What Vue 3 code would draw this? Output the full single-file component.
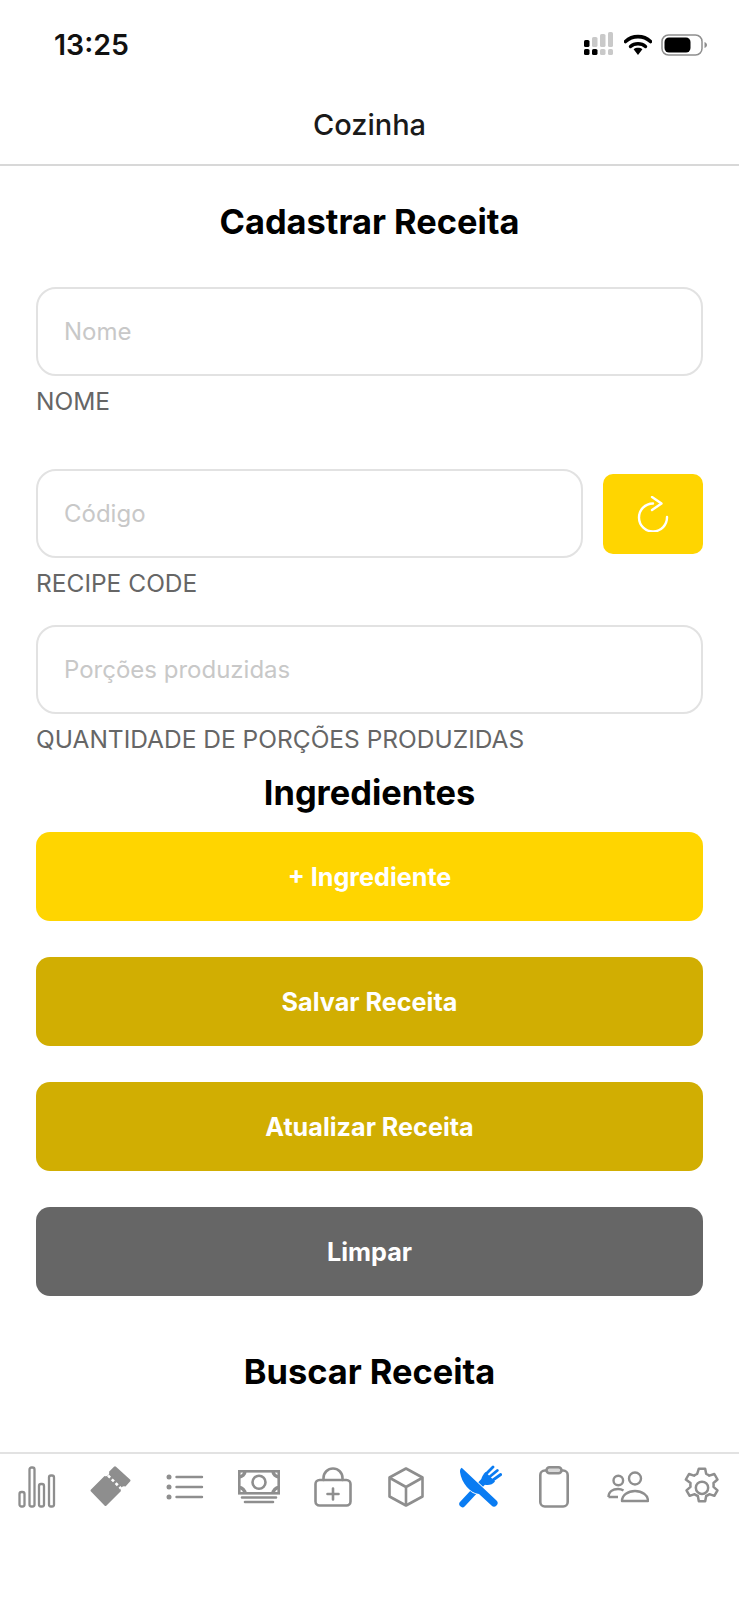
<script setup>
const buttons = [
  { text: '+ Ingrediente', cls: 'yellow' },
  { text: 'Salvar Receita', cls: 'gold' },
  { text: 'Atualizar Receita', cls: 'gold' },
  { text: 'Limpar', cls: 'gray' },
]
</script>

<template>
  <div class="screen">
    <div class="status">
      <span class="time">13:25</span>
      <div class="status-icons">
        <svg width="32" height="26" viewBox="0 0 32 26">
          <g fill="#000"><rect x="1" y="8" width="5.5" height="7" rx="1.6"/><rect x="1" y="17" width="5.5" height="6" rx="1.6"/><rect x="9" y="17" width="5.5" height="6" rx="1.6"/></g>
          <g fill="#c9c9c9"><rect x="9" y="5" width="5.5" height="10" rx="1.6"/><rect x="17" y="2" width="5.5" height="13" rx="1.6"/><rect x="25" y="0" width="5" height="15" rx="1.6"/><rect x="17" y="17" width="5.5" height="6" rx="1.6"/><rect x="25" y="17" width="5" height="6" rx="1.6"/></g>
        </svg>
        <svg width="28" height="22" viewBox="0 0 28 22">
          <path d="M1.5 7.5C8.5 1 19.5 1 26.5 7.5" fill="none" stroke="#000" stroke-width="3.6" stroke-linecap="round"/>
          <path d="M6.5 12.5C10.5 8.8 17.5 8.8 21.5 12.5" fill="none" stroke="#000" stroke-width="3.4" stroke-linecap="round"/>
          <path d="M9.6 15.2 14 21l4.4-5.8c-2.6-1.9-6.2-1.9-8.8 0z" fill="#000"/>
        </svg>
        <svg width="47" height="22" viewBox="0 0 47 22">
          <rect x="1" y="1" width="40" height="20" rx="6.5" fill="none" stroke="#8f8f8f" stroke-width="1.5"/>
          <rect x="3.5" y="3.5" width="26" height="15" rx="4.5" fill="#000"/>
          <path d="M43.5 8v6c1.5-.5 2.5-1.7 2.5-3s-1-2.5-2.5-3z" fill="#8f8f8f"/>
        </svg>
      </div>
    </div>

    <header class="nav">Cozinha</header>

    <main class="content">
      <h2 class="title first">Cadastrar Receita</h2>

      <div class="field">
        <input class="input" placeholder="Nome" />
        <div class="label">NOME</div>
      </div>

      <div class="field code">
        <div class="code-row">
          <input class="input" placeholder="Código" />
          <button class="refresh" type="button" aria-label="Gerar código">
            <svg width="32" height="36" viewBox="0 0 32 36" fill="none" stroke="#fff" stroke-width="2.4" stroke-linecap="round" stroke-linejoin="round">
              <path d="M16 7.5A14 14 0 1 0 30 21"/>
              <path d="M15 1l9.5 6.5L15 14"/>
            </svg>
          </button>
        </div>
        <div class="label">RECIPE CODE</div>
      </div>

      <div class="field portions">
        <input class="input" placeholder="Porções produzidas" />
        <div class="label">QUANTIDADE DE PORÇÕES PRODUZIDAS</div>
      </div>

      <h2 class="title ingredients">Ingredientes</h2>

      <div class="actions">
        <button v-for="b in buttons" :key="b.text" type="button" class="action" :class="b.cls">{{ b.text }}</button>
      </div>

      <h2 class="title search">Buscar Receita</h2>
    </main>

    <nav class="tabs">
      <svg width="38" height="42" viewBox="0 0 38 42" fill="none" stroke="#8e8e8e" stroke-width="2.3">
        <rect x="1.5" y="26" width="5" height="14.5" rx="2"/><rect x="11.5" y="1.5" width="5" height="39" rx="2"/><rect x="21" y="18" width="5" height="22.5" rx="2"/><rect x="31" y="9.5" width="5" height="31" rx="2"/>
      </svg>
      <svg width="42" height="42" viewBox="0 0 42 42">
        <path d="M1 23.5 14.5 10A3.4 3.4 0 0 0 19 5.7L24 .8Q25-.2 26 .8L40 13.5Q41 14.5 40 15.5L35.5 20.5A3.4 3.4 0 0 0 31 25L16.5 39.5Q15.5 40.5 14.5 39.5L1 25.5Q0 24.5 1 23.5z" fill="#8e8e8e"/>
        <path d="M18 9.5 31 22.5" stroke="#fff" stroke-width="2.6" stroke-dasharray="3 2.4" fill="none"/>
      </svg>
      <svg width="38" height="30" viewBox="0 0 38 30" fill="none" stroke="#8e8e8e" stroke-width="2.4" stroke-linecap="round">
        <circle cx="3" cy="5" r="2.5" fill="#8e8e8e" stroke="none"/><circle cx="3" cy="15" r="2.5" fill="#8e8e8e" stroke="none"/><circle cx="3" cy="25" r="2.5" fill="#8e8e8e" stroke="none"/>
        <path d="M10.5 5h25.5M10.5 15h25.5M10.5 25h25.5"/>
      </svg>
      <svg width="42" height="34" viewBox="0 0 42 34" fill="none" stroke="#8e8e8e" stroke-width="2.6">
        <rect x="1.3" y="1.3" width="39.4" height="22"/>
        <circle cx="21" cy="12.3" r="6.5"/>
        <path d="M1 7c3 0 6-2.5 6-6M41 7c-3 0-6-2.5-6-6M1 17.5c3 0 6 2.5 6 6M41 17.5c-3 0-6 2.5-6 6" stroke-width="3.4"/>
        <path d="M4 27.5h34M7 32h28" stroke-linecap="round"/>
      </svg>
      <svg width="38" height="40" viewBox="0 0 38 40" fill="none" stroke="#8e8e8e" stroke-width="2.6" stroke-linecap="round" stroke-linejoin="round">
        <rect x="1.5" y="13" width="35" height="25.5" rx="4"/>
        <path d="M9.5 13V11a9.500 9.500 0 0 1 19 0v2"/>
        <path d="M19 21.5v11M13.5 27h11"/>
      </svg>
      <svg width="36" height="40" viewBox="0 0 36 40" fill="none" stroke="#8e8e8e" stroke-width="2.6" stroke-linejoin="round">
        <path d="M18 1.5 34.5 10.5v19L18 38.5 1.5 29.5v-19z"/>
        <path d="M2 11 18 20l16-9M18 20v18.5"/>
      </svg>
      <svg width="44" height="44" viewBox="0 0 44 44">
        <g fill="none" stroke="#0a7cf2" stroke-linecap="round">
          <path d="M4.5 39 25 17" stroke-width="6.4"/>
          <path d="M28.5 8.5 35 2M32 11.5 39.3 5.5M35 15 42.700 9.500" stroke-width="2.8"/>
        </g>
        <path d="M27.5 7 37 16.5C34 20.5 28 21 24.5 18.5 22 16 23.5 11 27.5 7z" fill="#0a7cf2"/>
        <path d="M3.7 2.7 38.5 35.5A3.5 3.500 0 0 1 33.5 40.5L21 29C12 28 3.500 18 2 7 1.900 5 2.500 3.300 3.700 2.700z" fill="#0a7cf2" stroke="#fff" stroke-width="1.600" paint-order="stroke" stroke-linejoin="round"/>
      </svg>
      <svg width="30" height="42" viewBox="0 0 30 42" fill="none" stroke="#8e8e8e" stroke-width="2.6">
        <rect x="1.3" y="4.5" width="27.4" height="36" rx="4.5"/>
        <rect x="7.5" y="1.3" width="15" height="6" rx="3" fill="#d9d9d9"/>
      </svg>
      <svg width="42" height="32" viewBox="0 0 42 32" fill="none" stroke="#8e8e8e" stroke-width="2.4" stroke-linejoin="round">
        <circle cx="11.3" cy="9.5" r="4.8"/>
        <circle cx="28" cy="7.5" r="6"/>
        <path d="M1.500 26C1.500 20.500 6 18 11 18 13 18 15 18.500 16.500 19.500M1.500 26H11"/>
        <path d="M15 30C15 24 21 20 28 20S41 24 41 30z"/>
      </svg>
      <svg width="40" height="42" viewBox="0 0 24 25" fill="none" stroke="#8e8e8e" stroke-width="1.5" stroke-linejoin="round">
        <circle cx="12" cy="13" r="3.7"/>
        <path d="M10.100 1h3.800l.6 3.100c.7.300 1.300.6 1.900 1.100l3-1 1.900 3.300-2.400 2.100c.1.800.1 1.500 0 2.300l2.400 2.100-1.900 3.300-3-1c-.6.500-1.200.8-1.900 1.100l-.6 3.100h-3.800l-.6-3.100c-.7-.3-1.300-.6-1.900-1.100l-3 1-1.900-3.300 2.400-2.100c-.1-.8-.1-1.500 0-2.300L2.300 7.500l1.900-3.300 3 1c.6-.5 1.200-.8 1.900-1.100z" transform="translate(0 .5)"/>
      </svg>
    </nav>
  </div>
</template>

<style scoped>
.screen {
  width: 739px;
  height: 1600px;
  background: #fff;
  font-family: Inter, "Liberation Sans", sans-serif;
  color: #000;
  display: flex;
  flex-direction: column;
  overflow: hidden;
}
.status {
  height: 89px;
  box-sizing: border-box;
  padding: 28px 31px 0 54px;
  display: flex;
  justify-content: space-between;
  align-items: flex-start;
}
.time {
  font-size: 28.5px;
  font-weight: 600;
  line-height: 34px;
  color: #111;
}
.status-icons {
  display: flex;
  align-items: center;
  gap: 9px;
  height: 34px;
}
.nav {
  height: 77px;
  box-sizing: border-box;
  border-bottom: 2px solid #d8d8d8;
  text-align: center;
  font-size: 29px;
  font-weight: 500;
  line-height: 36px;
  padding-top: 18px;
  color: #1a1a1a;
}
.content {
  flex: 1;
  padding: 0 36px;
  min-height: 0;
}
.title {
  margin: 0;
  text-align: center;
  font-weight: 700;
  font-size: 34.4px;
  line-height: 40px;
}
.first { margin-top: 36px; margin-bottom: 45px; }
.input {
  display: block;
  width: 100%;
  height: 89px;
  box-sizing: border-box;
  border: 2px solid #e2e2e2;
  border-radius: 20px;
  padding: 0 26px;
  font: 400 24px Inter, "Liberation Sans", sans-serif;
  background: #fff;
  outline: none;
}
.input::placeholder { color: #c8c8c8; opacity: 1; }
.label {
  margin-top: 11px;
  font-size: 24.5px;
  line-height: 29px;
  color: #666;
}
.code { margin-top: 53px; }
.code-row {
  display: flex;
  align-items: center;
  gap: 20px;
}
.code-row .input { flex: 1; min-width: 0; }
.refresh {
  width: 100px;
  height: 80px;
  flex: none;
  border: 0;
  border-radius: 10px;
  background: #ffd500;
  padding: 0;
  display: flex;
  align-items: center;
  justify-content: center;
}
.portions { margin-top: 27px; }
.ingredients { margin-top: 19px; margin-bottom: 19px; }
.actions {
  display: flex;
  flex-direction: column;
  gap: 36px;
}
.action {
  height: 89px;
  border: 0;
  border-radius: 14px;
  color: #fff;
  font: 700 25.2px Inter, "Liberation Sans", sans-serif;
}
.yellow { background: #ffd500; }
.gold { background: #d1ae02; }
.gray { background: #666; }
.search { margin-top: 56px; }
.tabs {
  height: 148px;
  box-sizing: border-box;
  border-top: 2px solid #e2e2e2;
  display: grid;
  grid-template-columns: repeat(10, 1fr);
  justify-items: center;
  align-items: center;
  padding-bottom: 80px;
}
</style>
